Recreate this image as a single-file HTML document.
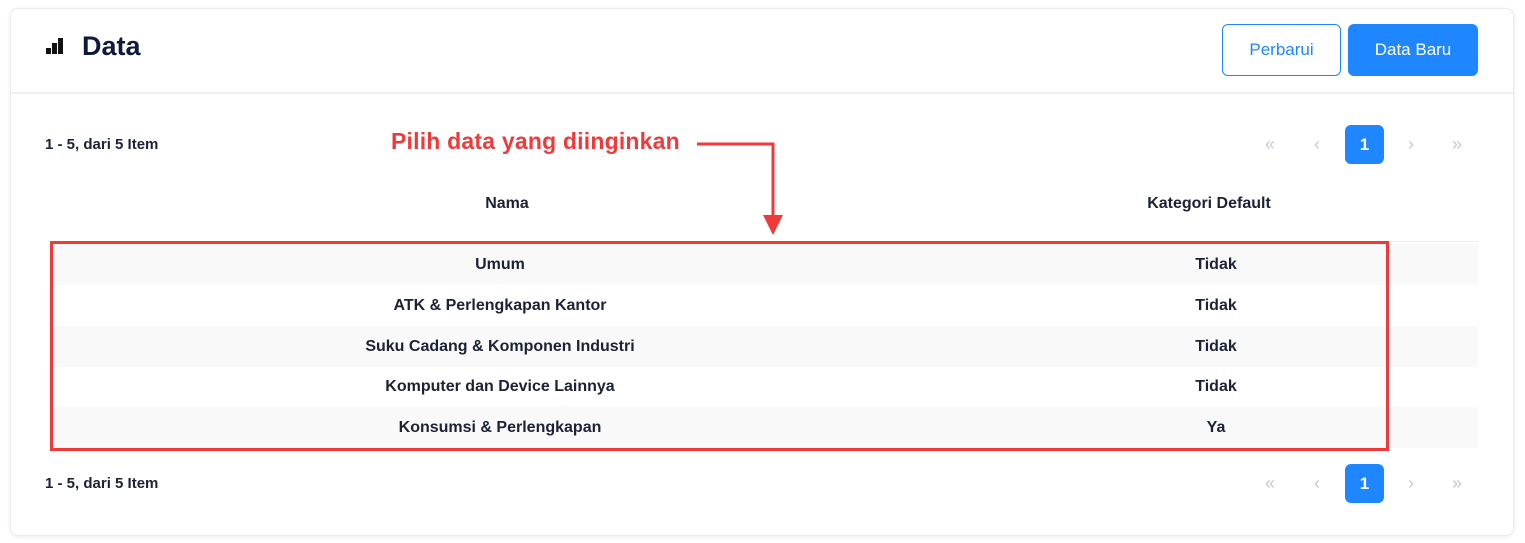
<!DOCTYPE html>
<html><head><style>
body{margin:0;width:1525px;height:543px;background:#fff;font-family:"Liberation Sans",sans-serif;position:relative;overflow:hidden;color:#1b2236}
.card{position:absolute;left:10px;top:8px;width:1502px;height:526px;border:1px solid #ececec;border-radius:8px;box-shadow:0 1px 4px rgba(0,0,0,.08);background:#fff}
.hd{position:absolute;left:0;top:0;width:100%;height:83px;border-bottom:2px solid #efefef}
.abs{position:absolute}
.btn{position:absolute;top:24px;height:52px;border-radius:6px;font-size:17px;display:flex;align-items:center;justify-content:center;box-sizing:border-box}
.row{position:absolute;left:50px;width:1428px;height:41px;font-weight:bold;font-size:16px}
.row span{position:absolute;top:12px;transform:translateX(-50%);white-space:nowrap}
.pg{position:absolute;font-size:18px;color:#c5c9d6}
.one{position:absolute;width:39px;height:39px;background:#1e87ff;color:#fff;border-radius:6px;font-weight:bold;font-size:17px;display:flex;align-items:center;justify-content:center}
</style></head><body>
<div class="card"><div class="hd"></div></div>
<svg class="abs" style="left:46px;top:38px" width="20" height="18"><rect x="0" y="10" width="5" height="6" fill="#111"/><rect x="6" y="5" width="5" height="11" fill="#111"/><rect x="12" y="0" width="5" height="16" fill="#111"/></svg>
<div class="abs" style="left:82px;top:31px;font-size:27px;font-weight:bold;color:#101a3a">Data</div>
<div class="btn" style="left:1222px;width:119px;border:1px solid #1e87ff;color:#1e87ff">Perbarui</div>
<div class="btn" style="left:1348px;width:130px;background:#1e87ff;color:#fff">Data Baru</div>

<div class="abs" style="left:45px;top:136px;font-size:15px;font-weight:bold">1 - 5, dari 5 Item</div>
<div class="abs" style="left:45px;top:475px;font-size:15px;font-weight:bold">1 - 5, dari 5 Item</div>
<div class="abs" style="left:391px;top:128px;font-size:23px;font-weight:bold;color:#f03a3a;letter-spacing:0.2px">Pilih data yang diinginkan</div>
<svg class="abs" style="left:690px;top:135px" width="100" height="105"><path d="M7 9H83V82" fill="none" stroke="#f03a3a" stroke-width="3"/><path d="M73 80L93 80L83 100Z" fill="#f03a3a"/></svg>

<div class="pg" style="left:1265px;top:134px">«</div><div class="pg" style="left:1314px;top:134px">‹</div>
<div class="one" style="left:1345px;top:125px">1</div>
<div class="pg" style="left:1408px;top:134px">›</div><div class="pg" style="left:1452px;top:134px">»</div>
<div class="pg" style="left:1265px;top:473px">«</div><div class="pg" style="left:1314px;top:473px">‹</div>
<div class="one" style="left:1345px;top:464px">1</div>
<div class="pg" style="left:1408px;top:473px">›</div><div class="pg" style="left:1452px;top:473px">»</div>

<div class="row" style="top:183px;height:58px;border-bottom:1px solid #eee"><span style="left:457px;top:12px">Nama</span><span style="left:1159px;top:12px">Kategori Default</span></div>
<div class="row" style="top:244px;background:#f9f9f9"><span style="left:450px">Umum</span><span style="left:1166px">Tidak</span></div>
<div class="row" style="top:285px"><span style="left:450px">ATK &amp; Perlengkapan Kantor</span><span style="left:1166px">Tidak</span></div>
<div class="row" style="top:326px;background:#f9f9f9"><span style="left:450px">Suku Cadang &amp; Komponen Industri</span><span style="left:1166px">Tidak</span></div>
<div class="row" style="top:366px"><span style="left:450px">Komputer dan Device Lainnya</span><span style="left:1166px">Tidak</span></div>
<div class="row" style="top:407px;background:#f9f9f9"><span style="left:450px">Konsumsi &amp; Perlengkapan</span><span style="left:1166px">Ya</span></div>
<div class="abs" style="left:50px;top:241px;width:1333px;height:204px;border:3px solid #f03a3a"></div>
</body></html>
